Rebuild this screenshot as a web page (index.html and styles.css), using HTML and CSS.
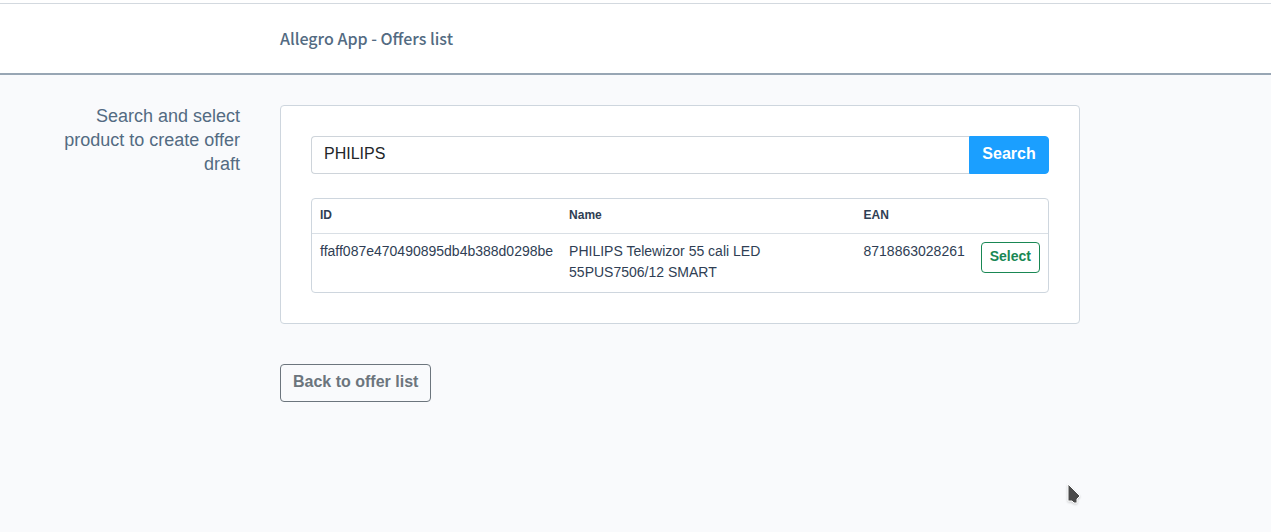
FILE: index.html
```html
<!DOCTYPE html>
<html lang="en">
<head>
<meta charset="utf-8">
<title>Allegro App - Offers list</title>
<meta name="viewport" content="width=device-width, initial-scale=1">
<link rel="stylesheet" href="styles.css">
</head>
<body>
<header class="header">
  <h1 class="header-title">Allegro App - Offers list</h1>
</header>
<main class="layout">
  <h2 class="intro">Search and select product to create offer draft</h2>
  <div class="content">
    <section class="card">
      <form class="search">
        <input class="search-input" type="text" aria-label="Product search" value="PHILIPS">
        <button class="btn btn-primary" type="button">Search</button>
      </form>
      <div class="table-frame">
        <table class="table">
          <thead>
            <tr><th scope="col">ID</th><th scope="col" class="col-name">Name</th><th scope="col">EAN</th><td></td></tr>
          </thead>
          <tbody>
            <tr>
              <td>ffaff087e470490895db4b388d0298be</td>
              <td>PHILIPS Telewizor 55 cali LED 55PUS7506/12 SMART</td>
              <td>8718863028261</td>
              <td><button class="btn btn-success btn-small" type="button">Select</button></td>
            </tr>
          </tbody>
        </table>
      </div>
    </section>
    <a class="btn btn-secondary" href="#">Back to offer list</a>
  </div>
</main>
<svg class="pointer" width="14" height="22" viewBox="0 0 14 22" aria-hidden="true">
  <path d="M1 1V18H5L7 20H10V16L13 13Z" fill="#4a4a4a" stroke="#fff" stroke-width="1"/>
</svg>
</body>
</html>
```

FILE: styles.css
```css
* {
  box-sizing: border-box;
}

body {
  margin: 0;
  background: #f9fafc;
  color: #2f3e54;
  font-family: "Liberation Sans", Arial, sans-serif;
  font-size: 14px;
  line-height: 21px;
}

.header {
  margin-top: 3px;
  padding: 22px 40px 23px 280px;
  border-top: 1px solid #d3d9df;
  border-bottom: 2px solid #98a6b4;
  background: #fff;
  box-shadow: 0 -3px #fff;
}

.header-title {
  margin: 0;
  color: #536b82;
  font-family: "Noto Sans CJK SC", sans-serif;
  font-size: 16px;
  font-weight: 500;
  line-height: 24px;
}

.layout {
  display: grid;
  grid-template-columns: 200px minmax(0, 800px);
  gap: 40px;
  padding: 29px 40px;
}

.intro {
  margin: 0;
  color: #536b82;
  font-size: 18px;
  font-weight: 400;
  line-height: 24px;
  text-align: right;
}

.content {
  display: flex;
  flex-direction: column;
  align-items: flex-start;
  gap: 40px;
  padding-top: 1px;
}

.card {
  display: flex;
  flex-direction: column;
  gap: 24px;
  width: 100%;
  padding: 30px;
  border: 1px solid #ced6de;
  border-radius: 4px;
  background: #fff;
}

.search {
  display: flex;
}

.search-input {
  flex: 1;
  min-width: 0;
  padding: 5px 12px 7px;
  border: 1px solid #ced4da;
  border-right: 0;
  border-radius: 4px 0 0 4px;
  background: #fff;
  color: #212529;
  font: inherit;
  font-size: 16px;
  line-height: 24px;
}

.btn {
  padding: 5px 12px 7px;
  border: 1px solid;
  border-radius: 4px;
  background: transparent;
  font-family: inherit;
  font-size: 16px;
  font-weight: 700;
  line-height: 24px;
  text-decoration: none;
}

.btn-primary {
  min-width: 80px;
  border-color: #1b9fff;
  border-radius: 0 4px 4px 0;
  background: #1b9fff;
  color: #fff;
}

.btn-success {
  color: #198754;
}

.btn-secondary {
  color: #6c757d;
}

.btn-small {
  display: block;
  padding: 3px 8px 5px;
  font-size: 14px;
  line-height: 21px;
}

.table-frame {
  border: 1px solid #ced6de;
  border-radius: 4px;
}

.table {
  width: 100%;
  border-collapse: collapse;
}

.table th,
.table td {
  padding: 7px 8px 9px;
  text-align: left;
  vertical-align: top;
}

.table tbody td:last-child {
  padding-top: 8px;
}

.table thead tr {
  border-bottom: 1px solid #d9dfe5;
}

.table th {
  font-size: 12px;
  line-height: 18px;
}

.table .col-name {
  width: 100%;
}

.pointer {
  position: absolute;
  top: 483px;
  left: 1067px;
  filter: drop-shadow(0 1px 1px #0003);
}
```
